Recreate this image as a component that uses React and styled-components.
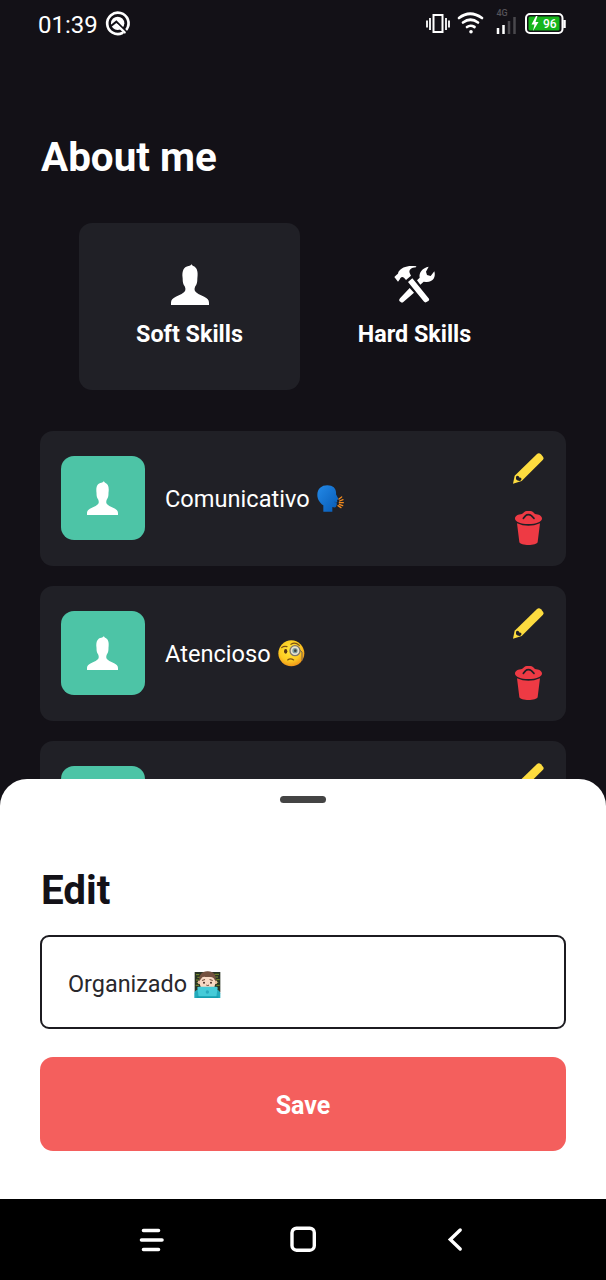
import React from "react";
import styled, { createGlobalStyle } from "styled-components";

const GlobalStyle = createGlobalStyle`
  * { box-sizing: border-box; }
  body { margin: 0; background: #121015; font-family: Roboto, sans-serif; }
  svg { display: block; flex: none; overflow: visible; }
`;

const Phone = styled.div`
  width: 606px;
  height: 1280px;
  display: grid;
  grid-template-rows: 48px 731px 420px 81px;
  background: #131117;
  overflow: hidden;
`;

const StatusBar = styled.header`
  display: flex;
  align-items: flex-start;
  justify-content: space-between;
  padding: 10px 40px 0 38px;
  color: #fff;
`;

const StatusGroup = styled.div`
  display: flex;
  align-items: flex-start;
  gap: 7px;
`;

const Clock = styled.span`
  font-size: 24px;
  line-height: 30px;
`;

const Screen = styled.main`
  padding: 86px 40px 0;
  overflow: hidden;
`;

const Title = styled.h1`
  margin: 0 0 0 1px;
  font-size: 40.4px;
  line-height: 48px;
  font-weight: 700;
  color: ${(p) => (p.$dark ? "#131117" : "#fff")};
`;

const Tabs = styled.nav`
  display: flex;
  gap: 4px;
  margin: 41px 0 0 39px;
`;

const Tab = styled.button`
  width: 221px;
  height: 167px;
  border: 0;
  border-radius: 13px;
  background: ${(p) => (p.$active ? "#202026" : "transparent")};
  color: #fff;
  font: 700 23.3px/28px Roboto, sans-serif;
  display: flex;
  flex-direction: column;
  align-items: center;
  gap: 15px;
  padding: 41px 0 0;
`;

const SkillList = styled.div`
  display: flex;
  flex-direction: column;
  gap: 20px;
  margin-top: 40.5px;
`;

const SkillCard = styled.article`
  flex: none;
  height: 135px;
  border-radius: 13px;
  background: #202026;
  display: flex;
  align-items: center;
  padding: 0 22px 0 20.5px;
`;

const Avatar = styled.div`
  width: 84.5px;
  height: 84.5px;
  border-radius: 13px;
  background: #4dc4a6;
  display: flex;
  align-items: center;
  justify-content: center;
`;

const SkillName = styled.div`
  flex: 1;
  display: flex;
  align-items: center;
  gap: 7px;
  margin-left: 20px;
  padding-top: 1px;
  font-size: 23.6px;
  line-height: 30px;
  color: #fff;
`;

const Actions = styled.div`
  display: flex;
  flex-direction: column;
  align-items: center;
  gap: 27px;
  padding-top: 2px;
`;

const Sheet = styled.section`
  background: #fff;
  border-radius: 27px 27px 0 0;
  padding: 17px 40px 0;
  display: flex;
  flex-direction: column;
`;

const Handle = styled.div`
  width: 46px;
  height: 7px;
  border-radius: 4px;
  background: #444;
  align-self: center;
  margin-bottom: 64px;
`;

const Field = styled.div`
  height: 94px;
  margin-top: 20px;
  border: 2px solid #1c1b20;
  border-radius: 9px;
  display: flex;
  align-items: center;
  gap: 7px;
  padding: 4px 26px 0 26px;
  font-size: 23.4px;
  color: #29282c;
`;

const SaveButton = styled.button`
  height: 94px;
  margin-top: 28px;
  border: 0;
  border-radius: 13px;
  background: #f45f5d;
  color: #fff;
  font: 700 25px/30px Roboto, sans-serif;
  padding: 4px 0 0;
`;

const NavBar = styled.footer`
  background: #000;
  display: flex;
  align-items: center;
  justify-content: center;
  gap: 126px;
  padding-top: 1px;
`;

const Person = ({ width, height }) => (
  <svg width={width} height={height} viewBox="63 43 111 121" preserveAspectRatio="none" fill="#fff">
    <path d="M63 164V157C63 149 68 145 77 140C90 134 100 130 104 123C106 118 105 114 103 109C99 104 97 98 97 85C94 61 102 51 114 49C119 48 122 46 124 43C124 46 125 47 128 49C138 53 143 63 140 85C140 98 138 104 134 109C132 114 131 118 133 123C137 130 147 134 160 140C169 145 174 149 174 157V164Z" />
  </svg>
);

const Tools = () => (
  <svg width="42" height="41" viewBox="72 43 126 123" fill="#fff">
    <path d="M73 82L80 75C83 74 85 71 85 67C94 53 112 46 139 50L138 53C124 54 116 60 119 70L123 78L108 91L102 84C96 79 91 83 90 88L84 96Z" />
    <path d="M114 97L127 86L177 147Q179 151 175 154L168 158Q164 159 161 155Z" />
    <path d="M119 115L132 129L100 157Q96 160 92 157L88 154Q86 151 90 146Z" />
    <path d="M141 92L149 84C146 68 158 54 176 51L168 66L171 76L182 79L193 65C198 82 190 98 168 97L161 96L151 105Z" />
  </svg>
);

const Pencil = () => (
  <svg width="31" height="31" viewBox="71 68 93 93">
    <path fill="#fddc3f" d="M71 160L76 136L143 71Q149 66 155 72L161 79Q165 84 161 88L97 152Z" />
    <path fill="#202026" d="M80 139Q84 134 88 138L91 142L95 142Q99 149 91 152Q84 152 80 147Z" />
  </svg>
);

const Trash = () => (
  <svg width="27" height="34" viewBox="22 185 81 102">
    <path fill="#ee3a44" d="M22 208C22 199 32 195 43 194L50 188Q53 185 57 185H68Q72 185 76 188L82 194C93 195 103 199 103 208C103 217 85 224 62 224C40 224 22 217 22 208Z" />
    <path fill="none" stroke="#202026" strokeWidth="5" strokeLinecap="round" strokeLinejoin="round" d="M47 207L54 199Q57 196 62 196Q67 196 71 199L79 207" />
    <path fill="#ee3a44" d="M28 222Q62 237 97 222L90 278C88 290 37 290 35 278Z" />
  </svg>
);

const SpeakingHead = () => (
  <svg width="27" height="27" viewBox="0 0 81 81">
    <defs>
      <linearGradient id="head" x1="0" y1="0" x2="1" y2="1">
        <stop offset="0" stopColor="#2389e7" />
        <stop offset="1" stopColor="#075ab5" />
      </linearGradient>
    </defs>
    <path fill="url(#head)" d="M19 80V61C8 54 1 42 1 30C1 11 14 1 31 1C49 1 59 12 57 28L64 41Q65 44 60 45L61 50L57 53L60 56L57 65Q55 69 46 66V80Z" />
    <path stroke="#174f8c" strokeWidth="2" d="M52 51L60 53" />
    <g stroke="#f18a1e" strokeWidth="4" strokeLinecap="round">
      <path d="M66 42L74 36M68 48L78 44M67 53H79M67 58L77 62M63 62L72 68" />
    </g>
  </svg>
);

const Monocle = () => (
  <svg width="27" height="27" viewBox="0 0 81 81">
    <defs>
      <radialGradient id="face" cx="45%" cy="38%" r="62%">
        <stop offset="0" stopColor="#ffe63c" />
        <stop offset=".65" stopColor="#fdcb22" />
        <stop offset="1" stopColor="#ef961a" />
      </radialGradient>
    </defs>
    <circle cx="40" cy="40" r="39" fill="url(#face)" />
    <path fill="none" stroke="#7a5015" strokeWidth="3.5" strokeLinecap="round" d="M11 23Q18 17 27 20M39 13Q51 5 64 16M29 60Q37 53 47 60" />
    <ellipse cx="23" cy="34" rx="5" ry="7" fill="#573414" />
    <circle cx="51" cy="32" r="15" fill="#e9e3cf" stroke="#80766a" strokeWidth="4" />
    <circle cx="51" cy="32" r="8" fill="#7d9da2" />
    <circle cx="52" cy="32" r="4" fill="#3e423b" />
    <path fill="none" stroke="#74624a" strokeWidth="3" d="M66 31L72 36V62" />
  </svg>
);

const Technologist = () => (
  <svg width="27" height="27" viewBox="0 0 81 81">
    <path fill="#293324" d="M2 3H79V64H2Z" />
    <path fill="none" stroke="#90a52d" strokeWidth="2.5" d="M6 11H16M10 19H22M6 27H14M8 35H18M5 43H15M61 10H75M64 18H72M67 26H77M64 34H73M67 43H77" />
    <circle cx="17" cy="34" r="6" fill="#e8bda0" />
    <circle cx="64" cy="34" r="6" fill="#e8bda0" />
    <path fill="#f7d9c4" d="M18 25Q19 9 40 9Q62 9 63 26V41Q62 58 40 59Q20 57 18 41Z" />
    <path fill="#74513f" d="M16 30C14 12 24 0 42 1C59 1 68 12 65 31L59 22Q54 17 46 18H34Q25 16 21 24Z" />
    <g fill="none" stroke="#6a4533" strokeWidth="3" strokeLinecap="round">
      <path d="M25 28L32 26M48 26L55 28M38 43Q41 45 44 43" />
    </g>
    <circle cx="30" cy="35" r="3" fill="#472e28" />
    <circle cx="51" cy="35" r="3" fill="#472e28" />
    <path fill="#22aabb" d="M1 81V66Q3 57 16 55H66Q78 58 79 67V81Z" />
    <path fill="#45cbd8" d="M10 50Q10 47 14 47H67Q71 47 71 51L67 77H14Z" />
    <circle cx="40" cy="63" r="5" fill="#28a9be" />
    <path fill="#159eaf" d="M8 76H73V81H8Z" />
  </svg>
);

const NotificationIcon = () => (
  <svg width="26" height="26" viewBox="0 0 78 78" fill="none" stroke="#fff">
    <path strokeWidth="8" strokeLinecap="round" d="M52 69A32 32 0 1 1 65 58" />
    <circle cx="38" cy="40" r="20" fill="#fff" stroke="none" />
    <path stroke="#131117" strokeWidth="6" d="M17 49L34 35L66 67" />
    <path strokeWidth="7" strokeLinecap="round" d="M36 45L59 67" />
  </svg>
);

const SystemIcons = () => (
  <svg width="140" height="32" viewBox="0 0 140 32" fill="none" stroke="#fff">
    <rect x="7.5" y="5" width="9" height="17" strokeWidth="2" />
    <path strokeWidth="1.8" d="M4 8V20M1 10.5V17.5M20 8V20M23 10.5V17.5" />
    <g strokeWidth="2.7" strokeLinecap="round">
      <path d="M33 8Q44 -.5 56 8M37 12.5Q44.5 7 52 12.5M41 17Q44.5 14.5 48.5 17" />
    </g>
    <circle cx="45" cy="21.7" r="1.8" fill="#fff" stroke="none" />
    <text x="70.5" y="5.5" fill="#555359" stroke="none" fontFamily="Roboto" fontSize="9" fontWeight="500">4G</text>
    <g strokeWidth="2.5">
      <path d="M72 24V18M77.500 24V15" />
      <path stroke="#4a484d" d="M83 24V11M88.500 24V7" />
    </g>
    <rect x="100" y="4" width="36.5" height="19" rx="4" strokeWidth="2" />
    <path strokeWidth="2.5" d="M138.500 10V18" />
    <rect x="102.500" y="6.5" width="31" height="14" rx="1.5" fill="#16b51b" stroke="none" />
    <path fill="#fff" stroke="none" d="M110 6L105.500 14.500H108.500L107 21L112.500 12H109.500L111.500 6Z" />
    <text x="117" y="17.8" fill="#fff" stroke="none" fontFamily="Roboto" fontSize="12" fontWeight="500">96</text>
  </svg>
);

const RecentsIcon = () => (
  <svg width="26" height="28" viewBox="0 0 26 28" stroke="#fff" strokeWidth="3.6" strokeLinecap="round">
    <path d="M5.5 4.5H20.5M3.5 14H24M5.5 23.5H20.5" />
  </svg>
);
const HomeIcon = () => (
  <svg width="26" height="28" viewBox="0 0 26 28" fill="none" stroke="#fff" strokeWidth="3.4">
    <rect x="2" y="2.2" width="22.3" height="22" rx="4.5" />
  </svg>
);
const BackIcon = () => (
  <svg width="26" height="28" viewBox="0 0 26 28" fill="none" stroke="#fff" strokeWidth="3.4" strokeLinecap="round">
    <path d="M18.2 4L8.3 13.5L18.2 23" />
  </svg>
);

const skills = [
  { id: 1, name: "Comunicativo", Emoji: SpeakingHead },
  { id: 2, name: "Atencioso", Emoji: Monocle },
  { id: 3, name: "", Emoji: Technologist },
];

export default function App() {
  return (
    <Phone>
      <GlobalStyle />
      <StatusBar>
        <StatusGroup>
          <Clock>01:39</Clock>
          <NotificationIcon />
        </StatusGroup>
        <SystemIcons />
      </StatusBar>
      <Screen>
        <Title>About me</Title>
        <Tabs>
          <Tab $active>
            <Person width={38} height={41} />
            Soft Skills
          </Tab>
          <Tab>
            <Tools />
            Hard Skills
          </Tab>
        </Tabs>
        <SkillList>
          {skills.map(({ id, name, Emoji }) => (
            <SkillCard key={id}>
              <Avatar>
                <Person width={31} height={34} />
              </Avatar>
              <SkillName>
                {name}
                <Emoji />
              </SkillName>
              <Actions>
                <Pencil />
                <Trash />
              </Actions>
            </SkillCard>
          ))}
        </SkillList>
      </Screen>
      <Sheet>
        <Handle />
        <Title as="h2" $dark>Edit</Title>
        <Field>
          Organizado
          <Technologist />
        </Field>
        <SaveButton>Save</SaveButton>
      </Sheet>
      <NavBar>
        <RecentsIcon />
        <HomeIcon />
        <BackIcon />
      </NavBar>
    </Phone>
  );
}
